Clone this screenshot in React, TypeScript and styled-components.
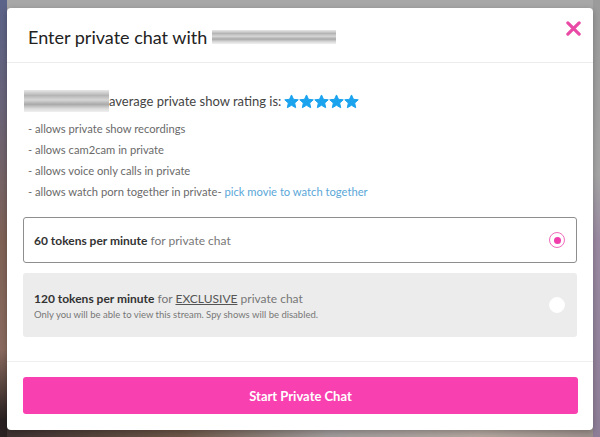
import React from "react";
import styled, { createGlobalStyle } from "styled-components";

const GlobalStyle = createGlobalStyle`
  html, body {
    margin: 0;
    padding: 0;
  }
  body {
    width: 600px;
    height: 437px;
    overflow: hidden;
    font-family: Lato, "Noto Sans", Arial, sans-serif;
    background: #a7a7a7;
  }
`;

const Backdrop = styled.div`
  position: relative;
  width: 600px;
  height: 437px;
  box-sizing: border-box;
  padding: 8px 7px 0;
  background:
    linear-gradient(180deg, #5a6389 0%, #6a6478 25%, #7f6256 55%, #8a6a5f 80%, #2a2222 96%) left top / 7px 100% no-repeat,
    linear-gradient(180deg, #9b9b9b 0%, #a5a5a5 40%, #9a8aa2 55%, #8e7e98 100%) right top / 7px 100% no-repeat,
    linear-gradient(90deg, #3c3030 0%, #6d5648 30%, #a19c9c 55%, #b4a7a0 80%, #9a8f8a 100%) left bottom / 100% 10px no-repeat,
    #a7a7a7;
`;

const Modal = styled.div`
  width: 586px;
  height: 422px;
  background: #fff;
  border-radius: 4px;
  display: flex;
  flex-direction: column;
  box-shadow: 0 2px 6px rgba(0, 0, 0, 0.25);
  overflow: hidden;
`;

const Header = styled.div`
  display: flex;
  align-items: center;
  justify-content: space-between;
  height: 55px;
  padding: 0 12px 0 21px;
  border-bottom: 1px solid #ececec;
  box-sizing: border-box;
`;

const Title = styled.h2`
  margin: 4px 0 0;
  font-size: 18px;
  font-weight: 400;
  color: #222;
  display: flex;
  align-items: center;
`;

const Blur = styled.span<{ $w: number; $h: number }>`
  display: inline-block;
  width: ${(p) => p.$w}px;
  height: ${(p) => p.$h}px;
  background: linear-gradient(
    180deg,
    #e8e8e8 0%,
    #b5b5b5 25%,
    #d6d6d6 45%,
    #a9a9a9 65%,
    #dcdcdc 85%,
    #efefef 100%
  );
  filter: blur(0.6px);
`;

const CloseButton = styled.button`
  border: none;
  background: none;
  padding: 0;
  margin: -14px -2px 0 0;
  width: 20px;
  height: 20px;
  cursor: pointer;
  display: flex;
  align-items: center;
  justify-content: center;
`;

const Body = styled.div`
  flex: 1;
  padding: 27px 16px 0;
  border-bottom: 1px solid #efefef;
`;

const RatingLine = styled.div`
  display: flex;
  align-items: center;
  font-size: 13px;
  color: #444;
  margin-left: 1px;
`;

const Stars = styled.span`
  display: inline-flex;
  gap: 0;
  margin-left: 3px;
`;

const Features = styled.ul`
  list-style: none;
  padding: 0;
  margin: 6px 0 0 5px;
`;

const Feature = styled.li`
  font-size: 11.2px;
  color: #6a6a6a;
  line-height: 21px;
`;

const Link = styled.a`
  color: #5aa7d8;
  text-decoration: none;
`;

const Options = styled.div`
  display: flex;
  flex-direction: column;
  gap: 10px;
  margin-top: 15px;
`;

const Option = styled.label<{ $selected?: boolean }>`
  display: flex;
  align-items: center;
  justify-content: space-between;
  box-sizing: border-box;
  min-height: ${(p) => (p.$selected ? 46 : 64)}px;
  padding: 0 11px 0 10px;
  border-radius: 3px;
  border: 1px solid ${(p) => (p.$selected ? "#8e8e8e" : "transparent")};
  background: ${(p) => (p.$selected ? "#fff" : "#ececec")};
  cursor: pointer;
`;

const OptionText = styled.div`
  display: flex;
  flex-direction: column;
  gap: 3px;
`;

const OptionTitle = styled.div`
  font-size: 12px;
  color: #777;
  strong {
    color: #333;
    font-weight: 700;
  }
  u {
    color: #555;
  }
`;

const OptionNote = styled.div`
  font-size: 9.5px;
  color: #777;
`;

const Radio = styled.span<{ $checked?: boolean }>`
  width: 16px;
  height: 16px;
  border-radius: 50%;
  box-sizing: border-box;
  background: #fff;
  border: 1px solid ${(p) => (p.$checked ? "#f06bbd" : "#fff")};
  display: flex;
  align-items: center;
  justify-content: center;
  &::after {
    content: "";
    width: 7px;
    height: 7px;
    border-radius: 50%;
    background: ${(p) => (p.$checked ? "#f03dab" : "transparent")};
  }
`;

const Footer = styled.div`
  height: 68px;
  padding: 15px 15px 0 16px;
  box-sizing: border-box;
`;

const StartButton = styled.button`
  width: 100%;
  height: 37px;
  border: none;
  border-radius: 3px;
  background: #f940b0;
  color: #fff;
  font-family: Lato, "Noto Sans", Arial, sans-serif;
  font-size: 13px;
  font-weight: 700;
  cursor: pointer;
`;

const Star = () => (
  <svg width="15" height="15" viewBox="0 0 24 24">
    <path
      d="M12 1.5l3.2 7 7.6.8-5.7 5.1 1.6 7.5L12 18l-6.7 3.9 1.6-7.5L1.2 9.3l7.6-.8z"
      fill="#1ba3ee"
      stroke="#1ba3ee"
      strokeWidth="1.6"
      strokeLinejoin="round"
    />
  </svg>
);

const features = [
  "- allows private show recordings",
  "- allows cam2cam in private",
  "- allows voice only calls in private",
];

export default function App() {
  return (
    <>
      <GlobalStyle />
      <Backdrop>
        <Modal>
          <Header>
            <Title>
              Enter private chat with&nbsp;
              <Blur $w={124} $h={14} />
            </Title>
            <CloseButton aria-label="Close">
              <svg width="15" height="15" viewBox="0 0 16 16">
                <path
                  d="M2 2L14 14M14 2L2 14"
                  stroke="#e94aa6"
                  strokeWidth="3.4"
                  strokeLinecap="round"
                />
              </svg>
            </CloseButton>
          </Header>
          <Body>
            <RatingLine>
              <Blur $w={85} $h={22} />
              average private show rating is:
              <Stars>
                <Star />
                <Star />
                <Star />
                <Star />
                <Star />
              </Stars>
            </RatingLine>
            <Features>
              {features.map((f) => (
                <Feature key={f}>{f}</Feature>
              ))}
              <Feature>
                - allows watch porn together in private-{" "}
                <Link href="#">pick movie to watch together</Link>
              </Feature>
            </Features>
            <Options>
              <Option $selected>
                <OptionText>
                  <OptionTitle>
                    <strong>60 tokens per minute</strong> for private chat
                  </OptionTitle>
                </OptionText>
                <Radio $checked />
              </Option>
              <Option>
                <OptionText>
                  <OptionTitle>
                    <strong>120 tokens per minute</strong> for <u>EXCLUSIVE</u>{" "}
                    private chat
                  </OptionTitle>
                  <OptionNote>
                    Only you will be able to view this stream. Spy shows will be
                    disabled.
                  </OptionNote>
                </OptionText>
                <Radio />
              </Option>
            </Options>
          </Body>
          <Footer>
            <StartButton>Start Private Chat</StartButton>
          </Footer>
        </Modal>
      </Backdrop>
    </>
  );
}
